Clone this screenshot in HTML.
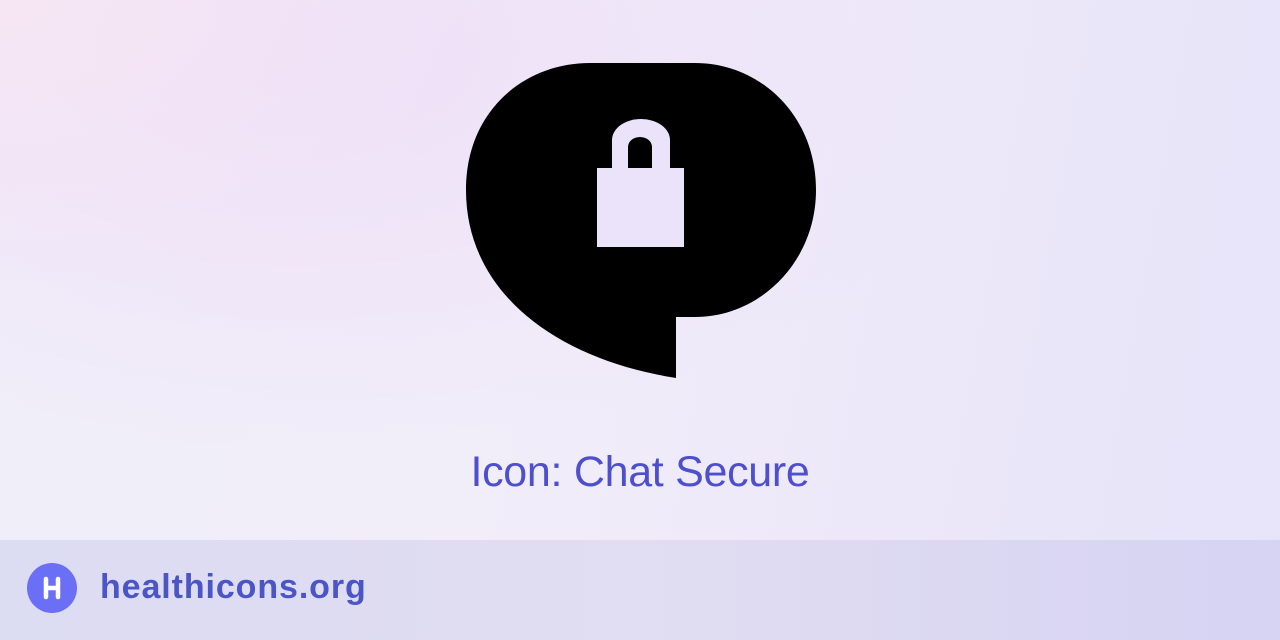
<!DOCTYPE html>
<html><head><style>
html,body{margin:0;padding:0;width:1280px;height:640px;overflow:hidden;}
body{position:relative;font-family:"Liberation Sans",sans-serif;
background:radial-gradient(ellipse 500px 300px at 0px 0px,#f6e6f4 0%,rgba(246,230,244,0) 100%),radial-gradient(ellipse 700px 400px at 300px 50px,#eedff8 0%,rgba(238,223,248,0) 100%),linear-gradient(100deg,#f0eef9 0%,#f1edf9 40%,#e7e3f9 100%);}
.t{position:absolute;left:0;width:1280px;top:448px;text-align:center;font-size:43px;color:#4d4fcf;letter-spacing:-0.3px;}
.f{position:absolute;left:0;top:540px;width:1280px;height:100px;background:linear-gradient(90deg,#dcdcf3,#e1ddf2 50%,#d6d3f3);}
.c{position:absolute;left:27px;top:563px;width:50px;height:50px;border-radius:50%;background:#6a6ff5;}
.h{position:absolute;left:100px;top:568px;font-size:34px;font-weight:bold;color:#4a55c8;letter-spacing:0.9px;}
</style></head><body>
<svg width="1280" height="640" style="position:absolute;left:0;top:0">
<path d="M590,63 H695 C760,63 816,115 816,190 C816,262 760,317 695,317 H676 V378 C560,360 466,295 466,190 C466,110 525,63 590,63 Z" fill="#000"/>
<path d="M612,168 V140 A29,21 0 0 1 670,140 V168 Z M628,168 H652 V147 A12,10 0 0 0 628,147 Z" fill="#ebe3fa" fill-rule="evenodd"/>
<rect x="597" y="168" width="87" height="79" fill="#ebe3fa"/>
</svg>
<div class="t">Icon: Chat Secure</div>
<div class="f"></div>
<div class="c"><svg width="50" height="50"><path d="M19,16 V34 M31,16 V34 M19,25 H31" stroke="#fff" stroke-width="4.5" stroke-linecap="round" fill="none"/></svg></div>
<div class="h">healthicons.org</div>
</body></html>
